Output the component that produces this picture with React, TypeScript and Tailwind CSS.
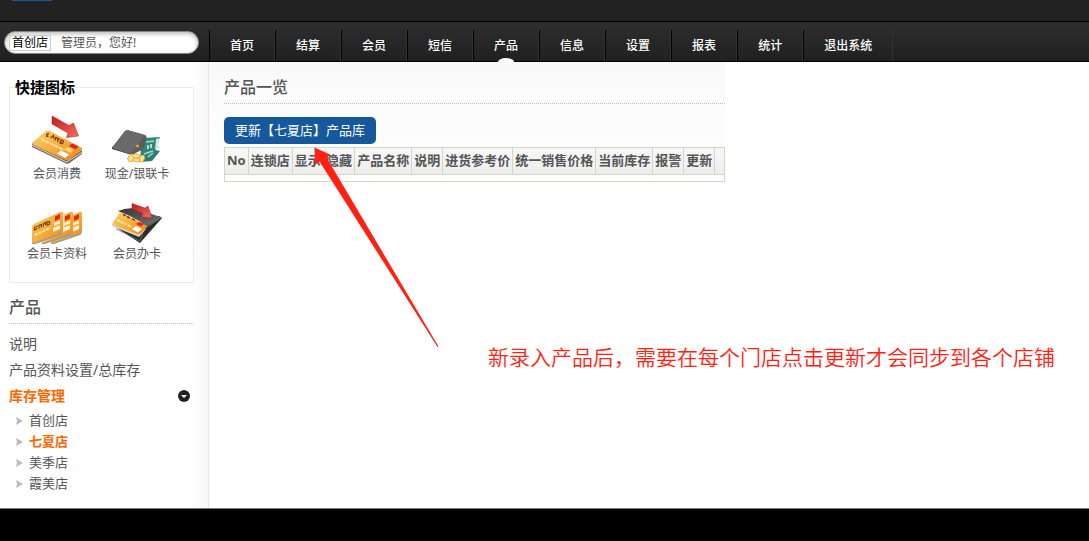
import type { ReactNode } from "react";
import clsx from "clsx";

const navItems = ["首页", "结算", "会员", "短信", "产品", "信息", "设置", "报表", "统计", "退出系统"];

const columns = ["No", "连锁店", "显示/隐藏", "产品名称", "说明", "进货参考价", "统一销售价格", "当前库存", "报警", "更新", ""];

const stores = ["首创店", "七夏店", "美季店", "霞美店"];

const ACTIVE_NAV = "产品";
const ACTIVE_STORE = "七夏店";

function Gradients() {
  return (
    <svg width="0" height="0" className="absolute" aria-hidden="true">
      <defs>
        <linearGradient id="gold" x1="0" y1="0" x2="1" y2="1">
          <stop offset="0" stopColor="#fbd06a" />
          <stop offset="0.5" stopColor="#f7ae3c" />
          <stop offset="1" stopColor="#ee8410" />
        </linearGradient>
        <linearGradient id="red" x1="0" y1="0" x2="1" y2="1">
          <stop offset="0" stopColor="#c4161c" />
          <stop offset="1" stopColor="#f4705a" />
        </linearGradient>
        <linearGradient id="gray" x1="0" y1="0" x2="1" y2="1">
          <stop offset="0" stopColor="#333333" />
          <stop offset="1" stopColor="#777777" />
        </linearGradient>
      </defs>
    </svg>
  );
}

function PayIcon() {
  return (
    <svg viewBox="0 0 50 50" className="size-[50px]" aria-hidden="true">
      <path d="M0 29v4l34 16.5q2 .7 3.500-.5L50 40v-4L35 46z" fill="#7b6a5c" />
      <path d="M0 31l34.500 17L50 38.500" fill="none" stroke="#ddd6cb" strokeWidth="1" />
      <path d="M14 17q2-1 4 0l31 16.500q2 1.500 0 3L37 45.500q-2 1.200-4 .2L1 30.500q-1.500-1 0-2.500z" fill="url(#gold)" />
      <path d="M17 19.500l-2 .5-.5 2 2 .5M18.500 24l3-2.500.5 3.500M23 26.500l1-3 3 1.500-1.500 1 .5 2M28 29l1-3q4 1 1.500 3.500z" fill="none" stroke="#7b3e10" strokeWidth="1.300" />
      <path d="M9 25l23 11" stroke="#fbe6b4" strokeWidth="2" strokeDasharray="4 1" />
      <path d="M37 32l3-2.500 6.500 3-3 3z" fill="#e8201a" />
      <path d="M32 35.500l3-2.500 6.500 3-3 3z" fill="#fbd884" />
      <path d="M25 39.500l4-3 8 4-4 3.500z" fill="#fff" />
      <path d="M20 2l17 9.500L41.500 9l5 13-12 1.500L36 19 20 10z" fill="url(#red)" stroke="#a8161a" strokeWidth="0.500" />
    </svg>
  );
}

function WalletIcon() {
  return (
    <svg viewBox="0 0 50 50" className="size-[50px]" aria-hidden="true">
      <path d="M29 33l19 4-8 10-12 1z" fill="#2c7d70" />
      <path d="M32 24l16-1-5 17-14 4z" fill="#2f8578" />
      <path d="M44 25l4-1-2 7 3 2-6 3z" fill="#cfe8e0" />
      <path d="M34 28l8-1M32 40l9-3M36 43l5-4" stroke="#a9d8cc" strokeWidth="1.500" />
      <path d="M36 31v4M39 30v4" stroke="#e6f4f0" strokeWidth="1.500" />
      <path d="M0 33v2l20 6 11-7 3-10z" fill="#333" />
      <path d="M13 17q1-1 3-.7L33 21q2 .7 1.500 3L31 34q-.5 1.500-2 2.300l-8 4q-1.500.5-3 0L1 34.500q-1.500-.8 0-2z" fill="#5c5c5c" />
      <path d="M13 17q1-1 3-.7L33 21 20 38q-1 1.500-3 1L1 34.500q-1.500-.8 0-2z" fill="#6a6a6a" />
      <circle cx="25.500" cy="32" r="1.500" fill="#f39a18" />
      <g fill="#fbe28e" stroke="#e7a42d" strokeWidth="0.800">
        <ellipse cx="19" cy="44" rx="3" ry="4" transform="rotate(20 19 44)" />
        <ellipse cx="24" cy="42" rx="4" ry="2" />
        <ellipse cx="25" cy="46" rx="4" ry="2" />
        <ellipse cx="30" cy="44.500" rx="2.500" ry="3.500" transform="rotate(20 30 44.500)" />
      </g>
    </svg>
  );
}

function CardFace() {
  return (
    <>
      <path d="M1 33q0-2 2-3l25-11.500q3-1 3 1.500v18q0 2-2 3L3 50H0z" fill="#9a9a96" />
      <path d="M0 33q0-2 2-3l26-12q3-1 3 1.500V36q0 2-2 3L2 49q-2 .5-2-1.500z" fill="url(#gold)" />
      <path d="M23 22.500l5-2.500v4.500L23 27z" fill="#e8201a" />
      <path d="M22 29l6-2.500v3L22 32zM21 34l7-3v4l-7 3z" fill="#fff4d2" />
    </>
  );
}

function CardsIcon() {
  return (
    <svg viewBox="0 0 50 50" className="size-[50px]" aria-hidden="true">
      <g transform="translate(19 0)"><CardFace /></g>
      <g transform="translate(10 0)"><CardFace /></g>
      <path d="M31 19v17q0 2-2 3L6 48.500" fill="none" stroke="#eee7dc" strokeWidth="2.500" />
      <CardFace />
      <path d="M5.500 32l-3 1.500v2.500l3-1.500M7 34.500v-3l2.500-1v3M11.500 32.500v-3l2-1v2.500M15 31v-3l2.500-.5v2.500z" fill="none" stroke="#7b3e10" strokeWidth="1.200" />
      <path d="M3 41l15-7" stroke="#fbe6b4" strokeWidth="2" strokeDasharray="3 1" />
    </svg>
  );
}

function NewCardIcon() {
  return (
    <svg viewBox="0 0 50 50" className="size-[50px]" aria-hidden="true">
      <path d="M2 32l26 17 22-25-3-2-20 8z" fill="#2c2c2c" />
      <path d="M4 35l24 12 4-12 15-10" fill="none" stroke="#777" strokeWidth="0.800" />
      <path d="M0 30v2l27 11 7-8z" fill="#d8d2c8" />
      <path d="M8 18l26 13q2 1 0 3l-5 5q-2 2-4 1L1 30.500q-1-1 0-2z" fill="url(#gold)" />
      <path d="M11 20.500l3 1M15 22.500l3 1.500M20 25l3 1" stroke="#7b3e10" strokeWidth="1.800" />
      <path d="M5 26l15 7" stroke="#fbe6b4" strokeWidth="2" strokeDasharray="3 1" />
      <path d="M24 30l3-2 5 2-3 2.500z" fill="#e8201a" />
      <path d="M20 35l4-3 6 3-4 3.500z" fill="#fff" />
      <path d="M6 17q10-4 19-2l25 8.500-15 8.500Q20 22 6 17z" fill="url(#gray)" />
      <path d="M20 9.500l13 4.500 3-2 4 12-11-1 2-3.500L20 15z" fill="url(#red)" stroke="#a8161a" strokeWidth="0.500" />
    </svg>
  );
}

function ChevronBadge() {
  return (
    <svg viewBox="0 0 12 12" className="size-3" aria-hidden="true">
      <circle cx="6" cy="6" r="6" fill="#222" />
      <path d="M3 5h6L6 8z" fill="#fff" />
    </svg>
  );
}

const shortcuts: { label: string; icon: ReactNode }[] = [
  { label: "会员消费", icon: <PayIcon /> },
  { label: "现金/银联卡", icon: <WalletIcon /> },
  { label: "会员卡资料", icon: <CardsIcon /> },
  { label: "会员办卡", icon: <NewCardIcon /> },
];

function Header() {
  return (
    <header className="bg-[#222]">
      <div className="h-[22px] border-b border-black px-3">
        <div className="h-px w-10 bg-[#15589b]" />
      </div>
      <div className="flex h-10 border-b border-black bg-linear-to-b from-[#2e2e2e] to-[#202020]">
        <div className="w-[209px] shrink-0 pt-[9px] pr-2.5 pl-1">
          <div className="flex h-[23px] items-center gap-2.5 rounded-full border border-[#888] bg-white px-1 text-[12px] leading-[14px] shadow-[inset_0_2px_4px_#bbb]">
            <span className="border border-[#ccc] px-0.5 text-black">首创店</span>
            <span className="text-[#555]">管理员，您好!</span>
          </div>
        </div>
        <nav className="flex pt-2">
          {navItems.map((item) => (
            <a
              key={item}
              href="#"
              className="relative block border-r border-l border-r-[#333] border-l-black px-5 text-[12px] leading-8 font-medium text-white"
            >
              {item}
              {item === ACTIVE_NAV && (
                <span className="absolute -bottom-px left-1/2 h-1 w-4 -translate-x-1/2 rounded-[50%_50%_0_0/100%_100%_0_0] bg-white" />
              )}
            </a>
          ))}
        </nav>
      </div>
    </header>
  );
}

function Sidebar() {
  return (
    <aside className="flex w-[209px] shrink-0 flex-col border-r border-[#e6e6e6] bg-linear-to-r from-white from-92% to-[#f7f7f7] pt-[13px] pr-3.5 pb-3.5 pl-[9px] text-[#555]">
      <fieldset className="border border-[#ebebeb] px-[7px] pb-[18px]">
        <legend className="-ml-0.5 text-[15px] leading-6 font-bold text-black">快捷图标</legend>
        <div className="grid grid-cols-[80px_80px] gap-y-2.5 pt-[15px]">
          {shortcuts.map((s) => (
            <a key={s.label} href="#" className="flex flex-col items-center text-[12px] leading-5 whitespace-nowrap">
              {s.icon}
              {s.label}
            </a>
          ))}
        </div>
      </fieldset>

      <h2 className="mt-2 border-b border-dotted border-[#bbb] text-[16px] leading-8 font-medium">产品</h2>

      <ul className="mt-[7px] text-[14px] leading-[26px]">
        <li><a href="#">说明</a></li>
        <li><a href="#">产品资料设置/总库存</a></li>
        <li>
          <a href="#" className="flex items-center justify-between pr-1 font-bold text-[#ff6600]">
            库存管理
            <ChevronBadge />
          </a>
          <ul className="pt-px pl-1.5 text-[13px] leading-[21px]">
            {stores.map((store) => (
              <li key={store}>
                <a href="#" className={clsx("flex items-center gap-1.5", store === ACTIVE_STORE && "font-bold text-[#ff6600]")}>
                  <svg viewBox="0 0 8 8" className="size-2" aria-hidden="true">
                    <path d="M1 0l7 4-7 4 1-4z" fill="#bbb" />
                  </svg>
                  {store}
                </a>
              </li>
            ))}
          </ul>
        </li>
      </ul>
    </aside>
  );
}

function ProductList() {
  return (
    <main className="relative min-w-0 flex-1">
      <div className="w-fit bg-linear-to-b from-[#f9f9f9] to-white to-100px pl-[15px]">
        <h1 className="border-b border-dotted border-[#bbb] pt-[9px] text-[16px] leading-8 font-medium text-[#555]">产品一览</h1>
        <button type="button" className="mt-[13px] block h-[27px] rounded-[5px] bg-[#15589b] px-[11px] text-[13px] text-white">
          更新【七夏店】产品库
        </button>
        <table className="mt-[3px] border-collapse border border-[#d5d5c3] text-[13px] text-[#555]">
          <thead className="bg-linear-to-b from-[#f8f8f8] to-[#ededed]">
            <tr>
              {columns.map((c, i) => (
                <th key={i} className="h-[27px] min-w-2.5 border border-[#d5d5c3] px-0.5 pt-0 pb-0.5 leading-5 font-bold whitespace-nowrap">
                  {c}
                </th>
              ))}
            </tr>
          </thead>
          <tbody>
            <tr>
              <td colSpan={columns.length} className="h-[7px] bg-white p-0" />
            </tr>
          </tbody>
        </table>
      </div>

      {/* annotation drawn over the page */}
      <svg viewBox="0 0 125 201" className="pointer-events-none absolute top-[85px] left-[105px] h-[201px] w-[125px]" aria-hidden="true">
        <path d="M0.500 0.500L16 7.500 12.500 10.500 124.500 199.500 123.500 200 5.500 14.500 1 18z" fill="#ff2213" />
      </svg>
      <p className="absolute top-[279px] left-[279px] text-[21px] leading-8 font-[350] whitespace-nowrap text-[#ff2213]">
        新录入产品后，需要在每个门店点击更新才会同步到各个店铺
      </p>
    </main>
  );
}

export default function App() {
  return (
    <div className="flex min-h-screen flex-col bg-white font-['Noto_Sans','Noto_Sans_CJK_SC',sans-serif]" lang="zh-CN">
      <Gradients />
      <Header />
      <div className="flex">
        <Sidebar />
        <ProductList />
      </div>
      <footer className="min-h-8 flex-1 border-t border-[#777] bg-black" />
    </div>
  );
}
